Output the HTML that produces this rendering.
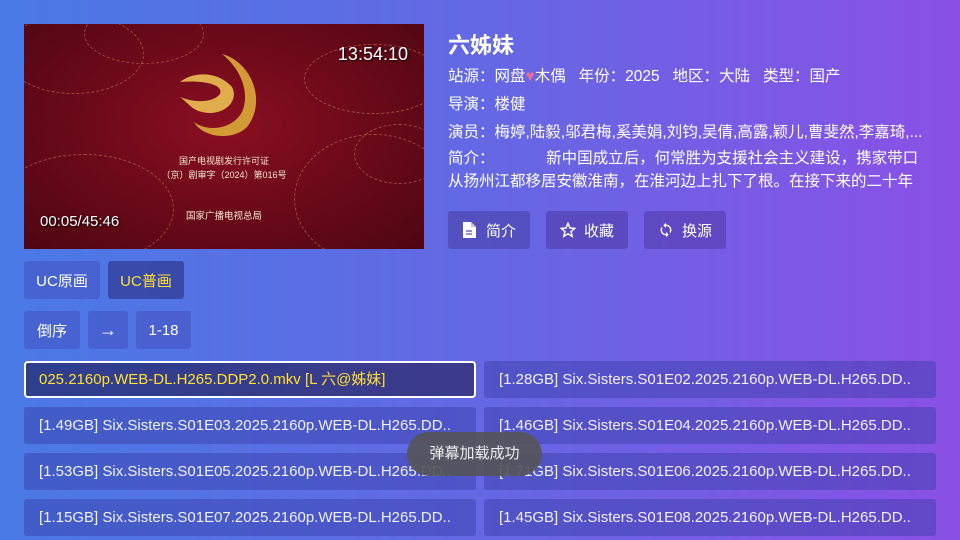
<!DOCTYPE html>
<html><head><meta charset="utf-8"><style>
*{margin:0;padding:0;box-sizing:border-box}
body{width:960px;height:540px;overflow:hidden;background:linear-gradient(90deg,#4a7ae6 0%,#6468e4 50%,#8a50e6 100%);font-family:"Liberation Sans","Noto Sans CJK SC",sans-serif;color:#fff;position:relative}
.abs{position:absolute}
.video{left:24px;top:24px;width:400px;height:225px;background:radial-gradient(ellipse at 50% 45%,#8a0f22 0%,#6e0a1a 45%,#4e0612 100%);overflow:hidden}
.cloud{position:absolute;border:1px dashed rgba(220,150,110,.45);border-radius:50%}
.btn{position:absolute;background:rgba(60,60,170,.35);border-radius:3px;font-size:15px;display:flex;align-items:center;justify-content:center}
.info{font-size:15.5px;position:absolute;left:448px;white-space:nowrap}
.ep{position:absolute;height:37px;width:452px;background:rgba(55,60,165,.45);border-radius:3px;font-size:15px;line-height:37px;padding-left:15px;white-space:nowrap;overflow:hidden;color:#f0f0ff}
</style></head><body>
<div class="abs video">
 <div class="cloud" style="left:-20px;top:-10px;width:140px;height:80px"></div>
 <div class="cloud" style="left:60px;top:-20px;width:120px;height:60px"></div>
 <div class="cloud" style="left:280px;top:20px;width:140px;height:70px"></div>
 <div class="cloud" style="left:-30px;top:130px;width:180px;height:110px"></div>
 <div class="cloud" style="left:270px;top:110px;width:160px;height:130px"></div>
 <div class="cloud" style="left:330px;top:100px;width:90px;height:60px"></div>
 <svg class="abs" style="left:148px;top:28px" width="100" height="90" viewBox="0 0 100 90">
  <path d="M50 2 C80 10 95 50 75 75 C60 90 30 85 22 70 C35 80 60 78 70 60 C78 42 70 18 50 2Z" fill="#d39b35"/>
  <path d="M8 30 C20 20 45 18 60 35 C68 50 50 65 30 60 C20 58 15 50 8 45 C20 50 40 52 48 42 C52 32 30 28 8 30Z" fill="#e0ad4c"/>
 </svg>
 <div class="abs" style="left:0;width:400px;top:130px;text-align:center;font-size:9px;color:#f3e6d0;line-height:14px">国产电视剧发行许可证<br>（京）剧审字（2024）第016号</div>
 <div class="abs" style="left:0;width:400px;top:184px;text-align:center;font-size:9.5px;color:#f3e6d0">国家广播电视总局</div>
 <div class="abs" style="right:16px;top:20px;font-size:18px;text-shadow:1px 1px 2px #000">13:54:10</div>
 <div class="abs" style="left:16px;top:189px;font-size:15px;text-shadow:1px 1px 2px #000">00:05/45:46</div>
</div>

<div class="abs" style="left:448px;top:28px;font-size:22px;font-weight:bold">六姊妹</div>
<div class="info" style="top:64px">站源：网盘<span style="color:#e66b9a">♥</span>木偶&nbsp;&nbsp;&nbsp;年份：2025&nbsp;&nbsp;&nbsp;地区：大陆&nbsp;&nbsp;&nbsp;类型：国产</div>
<div class="info" style="top:92px">导演：楼健</div>
<div class="info" style="top:120px">演员：梅婷,陆毅,邬君梅,奚美娟,刘钧,吴倩,高露,颖儿,曹斐然,李嘉琦,...</div>
<div class="info" style="top:147px;line-height:23px;width:485px;white-space:normal;height:46px;overflow:hidden">简介：&nbsp;&nbsp;&nbsp;&nbsp;&nbsp;&nbsp;&nbsp;&nbsp;&nbsp;&nbsp;&nbsp;&nbsp;新中国成立后，何常胜为支援社会主义建设，携家带口从扬州江都移居安徽淮南，在淮河边上扎下了根。在接下来的二十年</div>

<div class="btn" style="left:448px;top:211px;width:82px;height:38px;background:rgba(70,60,160,.55)"><svg width="14" height="16" viewBox="0 0 14 16" style="margin-right:10px"><path d="M1 0h8l5 5v11H1z" fill="#fff"/><path d="M9 0v5h5" fill="#ccc"/><path d="M4 9h6M4 12h6" stroke="#5a50b0" stroke-width="1.3"/></svg>简介</div>
<div class="btn" style="left:546px;top:211px;width:82px;height:38px;background:rgba(75,55,160,.55)"><svg width="16" height="16" viewBox="0 0 24 24" style="margin-right:8px"><path d="M12 2l3 7 7 .6-5.4 4.7 1.7 7.2L12 17.7 5.7 21.5l1.7-7.2L2 9.6 9 9z" fill="none" stroke="#fff" stroke-width="2.2"/></svg>收藏</div>
<div class="btn" style="left:644px;top:211px;width:82px;height:38px;background:rgba(80,55,165,.55)"><svg width="16" height="16" viewBox="0 0 24 24" style="margin-right:8px"><path d="M12 4V1L8 5l4 4V6a6 6 0 0 1 5.2 9l1.5 1.5A8 8 0 0 0 12 4zM12 18a6 6 0 0 1-5.2-9L5.3 7.5A8 8 0 0 0 12 20v3l4-4-4-4z" fill="#fff"/></svg>换源</div>

<div class="btn" style="left:24px;top:261px;width:76px;height:38px">UC原画</div>
<div class="btn" style="left:108px;top:261px;width:76px;height:38px;background:rgba(40,45,130,.6);color:#ffe033">UC普画</div>
<div class="btn" style="left:24px;top:311px;width:56px;height:38px">倒序</div>
<div class="btn" style="left:88px;top:311px;width:40px;height:38px;font-size:18px">→</div>
<div class="btn" style="left:136px;top:311px;width:55px;height:38px">1-18</div>

<div class="ep" style="left:24px;top:361px;background:linear-gradient(90deg,#2e3f8e,#3d3a8a);border:2px solid #fff;border-radius:4px;color:#ffe033;line-height:33px;padding-left:13px">025.2160p.WEB-DL.H265.DDP2.0.mkv [L 六@姊妹]</div>
<div class="ep" style="left:484px;top:361px">[1.28GB] Six.Sisters.S01E02.2025.2160p.WEB-DL.H265.DD..</div>
<div class="ep" style="left:24px;top:407px">[1.49GB] Six.Sisters.S01E03.2025.2160p.WEB-DL.H265.DD..</div>
<div class="ep" style="left:484px;top:407px">[1.46GB] Six.Sisters.S01E04.2025.2160p.WEB-DL.H265.DD..</div>
<div class="ep" style="left:24px;top:453px">[1.53GB] Six.Sisters.S01E05.2025.2160p.WEB-DL.H265.DD..</div>
<div class="ep" style="left:484px;top:453px">[1.71GB] Six.Sisters.S01E06.2025.2160p.WEB-DL.H265.DD..</div>
<div class="ep" style="left:24px;top:499px">[1.15GB] Six.Sisters.S01E07.2025.2160p.WEB-DL.H265.DD..</div>
<div class="ep" style="left:484px;top:499px">[1.45GB] Six.Sisters.S01E08.2025.2160p.WEB-DL.H265.DD..</div>

<div class="abs" style="left:407px;top:432px;width:135px;height:44px;border-radius:22px;background:rgba(85,85,90,.92);font-size:15px;line-height:44px;text-align:center;color:#eee">弹幕加载成功</div>
</body></html>
